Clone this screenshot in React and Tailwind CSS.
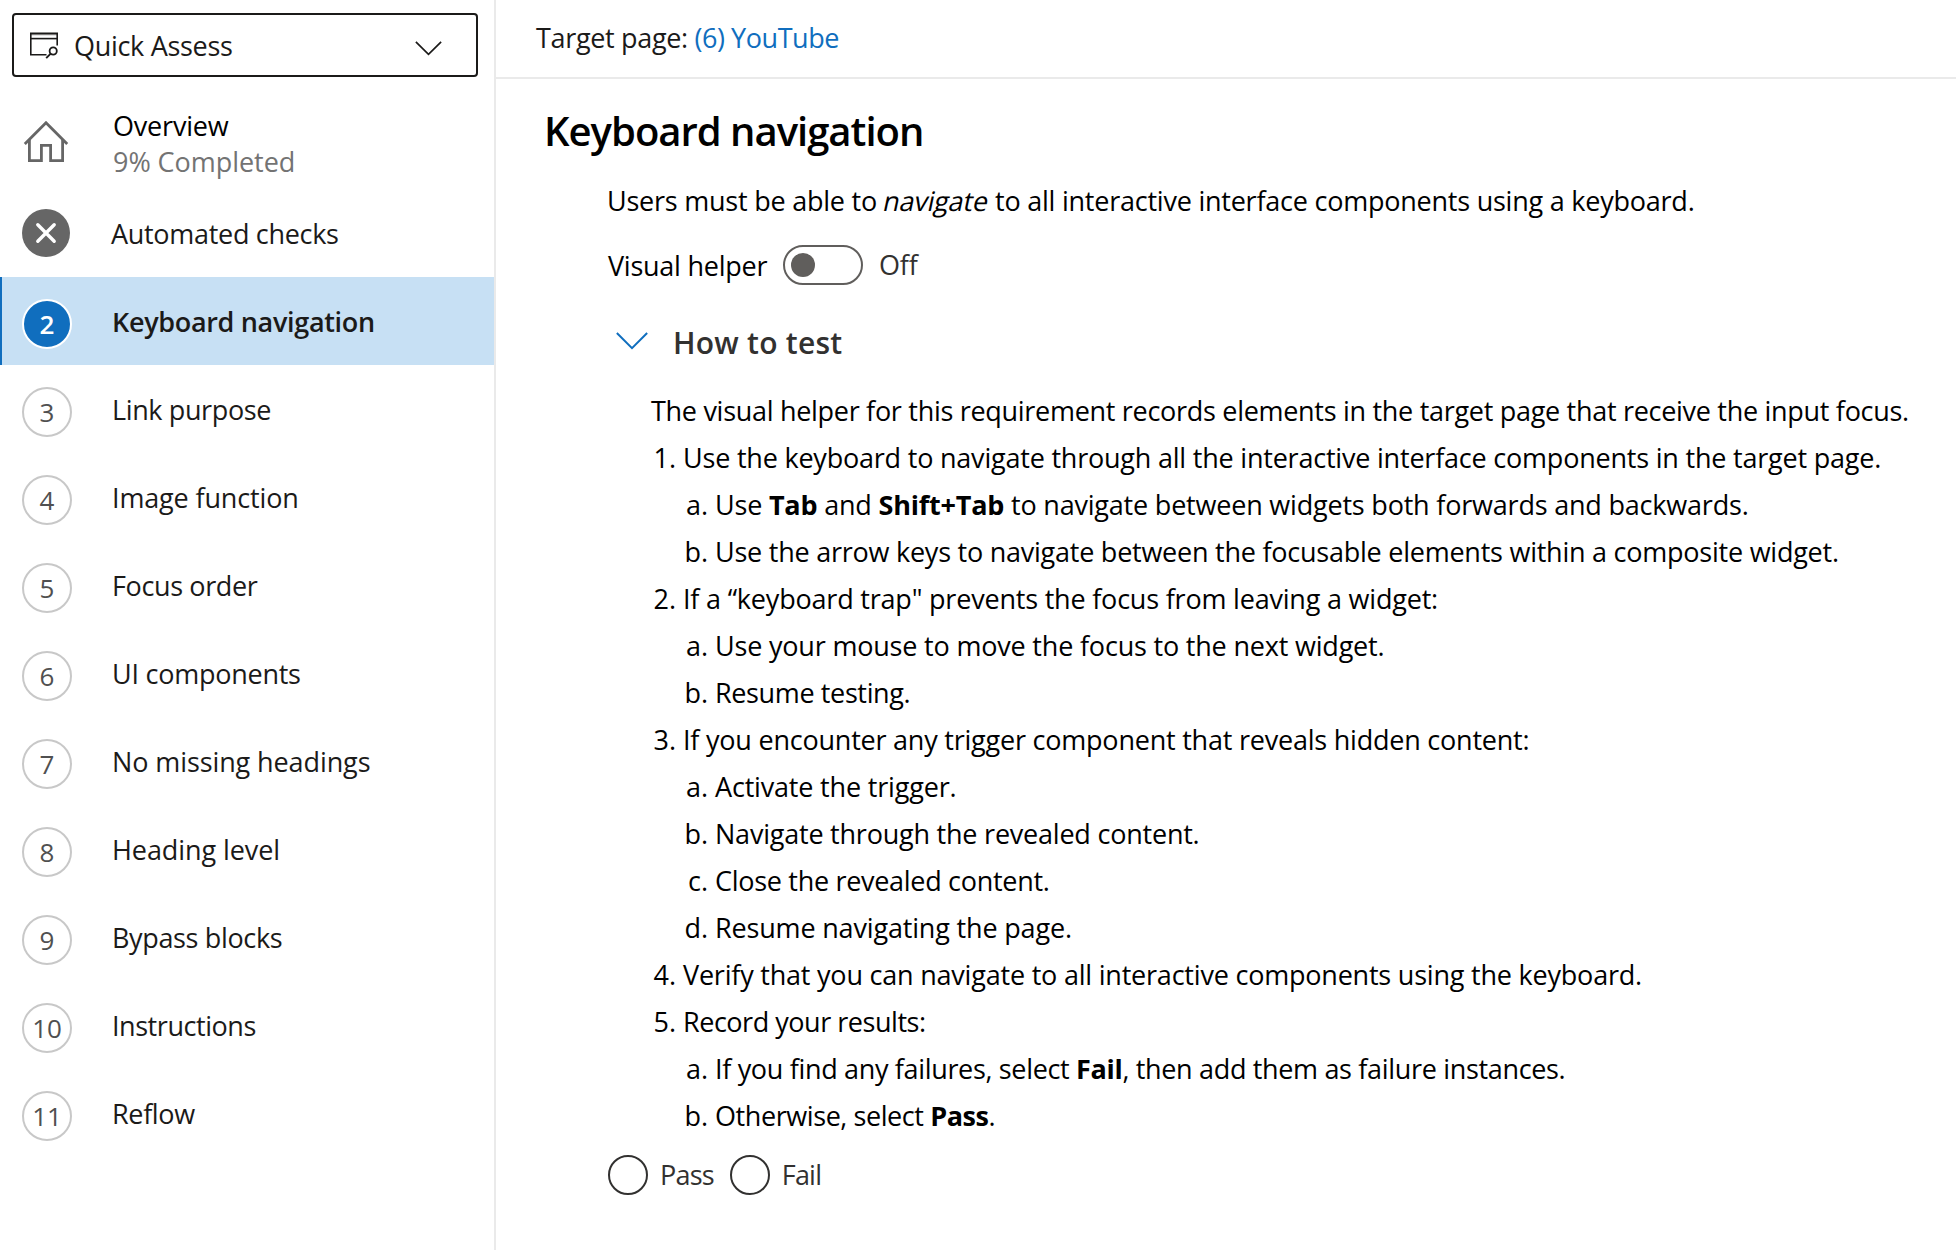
import React from "react";

const navItems = [
  { n: 2, label: "Keyboard navigation", active: true, track: "tracking-[-0.32px]" },
  { n: 3, label: "Link purpose", track: "tracking-[-0.38px]" },
  { n: 4, label: "Image function", track: "tracking-[-0.15px]" },
  { n: 5, label: "Focus order", track: "tracking-[-0.38px]" },
  { n: 6, label: "UI components", track: "tracking-[-0.25px]" },
  { n: 7, label: "No missing headings", track: "tracking-[-0.1px]" },
  { n: 8, label: "Heading level", track: "tracking-[-0.08px]" },
  { n: 9, label: "Bypass blocks", track: "tracking-[-0.35px]" },
  { n: 10, label: "Instructions", track: "tracking-[-0.45px]" },
  { n: 11, label: "Reflow", track: "tracking-[-0.35px]" },
];

const steps = [
  {
    text: "Use the keyboard to navigate through all the interactive interface components in the target page.",
    track: "tracking-[-0.21px]",
    sub: [
      {
        text: (
          <>
            Use <b>Tab</b> and <b>Shift+Tab</b> to navigate between widgets both forwards and backwards.
          </>
        ),
        track: "tracking-[-0.2px]",
      },
      {
        text: "Use the arrow keys to navigate between the focusable elements within a composite widget.",
        track: "tracking-[-0.24px]",
      },
    ],
  },
  {
    text: "If a “keyboard trap\" prevents the focus from leaving a widget:",
    track: "tracking-[-0.2px]",
    sub: [
      { text: "Use your mouse to move the focus to the next widget.", track: "tracking-[-0.19px]" },
      { text: "Resume testing.", track: "tracking-[-0.37px]" },
    ],
  },
  {
    text: "If you encounter any trigger component that reveals hidden content:",
    track: "tracking-[-0.22px]",
    sub: [
      { text: "Activate the trigger.", track: "tracking-[-0.18px]" },
      { text: "Navigate through the revealed content.", track: "tracking-[-0.22px]" },
      { text: "Close the revealed content.", track: "tracking-[-0.3px]" },
      { text: "Resume navigating the page.", track: "tracking-[-0.17px]" },
    ],
  },
  {
    text: "Verify that you can navigate to all interactive components using the keyboard.",
    track: "tracking-[-0.21px]",
    sub: [],
  },
  {
    text: "Record your results:",
    track: "tracking-[-0.47px]",
    sub: [
      {
        text: (
          <>
            If you find any failures, select <b>Fail</b>, then add them as failure instances.
          </>
        ),
        track: "tracking-[-0.33px]",
      },
      {
        text: (
          <>
            Otherwise, select <b>Pass</b>.
          </>
        ),
        track: "tracking-[-0.42px]",
      },
    ],
  },
];

function QuickAssessIcon() {
  return (
    <svg className="h-[28px] w-[30px] shrink-0" viewBox="0 0 30 28" fill="none" stroke="#1b1a19" strokeWidth="1.6">
      <path d="M1.8 3.2H28.2" stroke="#7a7978" strokeWidth="2" />
      <path d="M17.5 23.7H1.8V2.3H28.2V14.5" />
      <path d="M1.8 7.6H28.2" />
      <circle cx="24.2" cy="20" r="3.6" strokeWidth="1.8" />
      <path d="M21.7 22.7L17.2 27.2" strokeWidth="1.9" />
    </svg>
  );
}

function HomeIcon() {
  return (
    <svg className="h-[44px] w-[46px] shrink-0" viewBox="0 0 46 44" fill="none" stroke="#666666" strokeWidth="2.8">
      <path d="M1.8 24L23 2.8L44.2 24" />
      <path d="M6.4 20V40.6H18.4V25.4H27.6V40.6H39.6V20" />
    </svg>
  );
}

function Chevron({ className, color, width }) {
  return (
    <svg className={className} viewBox="0 0 30 17" fill="none" stroke={color} strokeWidth={width}>
      <path d="M0.7 0.9L15 15.2L29.3 0.9" />
    </svg>
  );
}

function SideBar() {
  return (
    <nav className="h-full w-[496px] shrink-0 border-r-2 border-[#eaeaea] pt-[13px]">
      <button className="ml-3 flex h-16 w-[466px] items-center rounded-[4px] border-2 border-[#1b1a19] pr-[34px] pl-[15px] text-[#1b1a19]">
        <QuickAssessIcon />
        <span className="ml-[15px] grow pt-0.5 text-left tracking-[-0.3px]">Quick Assess</span>
        <Chevron className="mt-[7px] h-[15px] w-[27px]" color="#1b1a19" width="1.9" />
      </button>

      <div className="mt-6 flex h-[88px] pl-[23px]">
        <span className="mt-[19px] flex w-[90px] shrink-0">
          <HomeIcon />
        </span>
        <div className="pt-[7px] leading-9">
          <div className="tracking-[-0.2px] text-black">Overview</div>
          <div className="tracking-[-0.05px] text-[#737373]">9% Completed</div>
        </div>
      </div>

      <div className="flex h-[88px] items-center pl-[22px]">
        <span className="mr-[41px] flex h-12 w-12 items-center justify-center rounded-full bg-[#666666]">
          <svg className="h-6 w-6" viewBox="0 0 24 24" stroke="#ffffff" strokeWidth="3.4" strokeLinecap="round">
            <path d="M3.8 3.8L20.2 20.2M20.2 3.8L3.8 20.2" />
          </svg>
        </span>
        <span className="pt-0.5 tracking-[-0.3px]">Automated checks</span>
      </div>

      {navItems.map((item) => (
        <div
          key={item.n}
          className={
            item.active
              ? "flex h-[88px] items-center border-l-2 border-[#106ebe] bg-[#c7e0f4] pl-5 font-semibold"
              : "flex h-[88px] items-center pl-[22px]"
          }
        >
          <span
            className={
              item.active
                ? "mt-1.5 flex h-[50px] w-[50px] shrink-0 items-center justify-center rounded-full border-2 border-white bg-[#106ebe] text-[26px] text-white"
                : "mt-1.5 flex h-[50px] w-[50px] shrink-0 items-center justify-center rounded-full border-2 border-[#c8c8c8] text-[26px] text-[#505050]"
            }
          >
            {item.n}
          </span>
          <span className={"ml-10 pt-0.5 " + item.track}>{item.label}</span>
        </div>
      ))}
    </nav>
  );
}

function Steps() {
  return (
    <ol className="leading-[47px]">
      {steps.map((step, i) => (
        <li key={i}>
          <div className="flex">
            <span className="mr-[7px] w-[27px] shrink-0 text-right">{i + 1}.</span>
            <span className={"whitespace-nowrap " + step.track}>{step.text}</span>
          </div>
          <ol>
            {step.sub.map((sub, j) => (
              <li key={j} className="flex">
                <span className="mr-[7px] w-[59px] shrink-0 text-right">{"abcd"[j]}.</span>
                <span className={"whitespace-nowrap " + sub.track}>{sub.text}</span>
              </li>
            ))}
          </ol>
        </li>
      ))}
    </ol>
  );
}

function Radio({ label, gap }) {
  return (
    <label className={"flex items-center " + gap}>
      <span className="h-10 w-10 rounded-full border-2 border-[#323130]" />
      <span className="ml-3 tracking-[-0.8px] text-[#323130]">{label}</span>
    </label>
  );
}

export default function App() {
  return (
    <div className="flex h-[1250px] w-[1956px] overflow-hidden bg-white font-['Open_Sans','Noto_Sans',sans-serif] text-[27px] text-[#1b1a19]">
      <SideBar />
      <div className="grow">
        <header className="flex h-[79px] items-center border-b-2 border-[#eaeaea] pl-10 whitespace-pre">
          <span className="tracking-[-0.33px]">Target page: </span>
          <a className="tracking-[-0.45px] text-[#106ebe]">(6) YouTube</a>
        </header>

        <main className="pl-12 text-black">
          <h1 className="mt-[28px] text-[40px] leading-12 font-semibold tracking-[-1px]">Keyboard navigation</h1>

          <div className="pl-16">
            <p className="mt-[28px] -ml-px leading-9 tracking-[-0.23px] whitespace-nowrap">
              Users must be able to <em className="inline-block -skew-x-12 not-italic">navigate</em> to all interactive interface components using a keyboard.
            </p>

            <div className="mt-[26px] flex h-10 items-center">
              <span className="w-[175px] pt-0.5 tracking-[-0.25px]">Visual helper</span>
              <span className="flex h-10 w-20 items-center rounded-full border-2 border-[#605e5c] pl-1.5">
                <span className="h-6 w-6 rounded-full bg-[#605e5c]" />
              </span>
              <span className="ml-4 tracking-[-0.2px] text-[#323130]">Off</span>
            </div>

            <div className="mt-[38px] flex h-10 pl-2">
              <Chevron className="mt-[9px] h-[18px] w-[32px]" color="#106ebe" width="1.9" />
              <h2 className="ml-[25px] text-[30px] leading-10 font-semibold tracking-[0.25px] text-[#323130]">How to test</h2>
            </div>

            <div className="mt-[24px] pl-[42px]">
              <p className="ml-px leading-[47px] tracking-[-0.295px] whitespace-nowrap">
                The visual helper for this requirement records elements in the target page that receive the input focus.
              </p>
              <div className="-ml-px">
                <Steps />
              </div>
            </div>

            <div className="mt-4 flex">
              <Radio label="Pass" gap="" />
              <Radio label="Fail" gap="ml-4" />
            </div>
          </div>
        </main>
      </div>
    </div>
  );
}
